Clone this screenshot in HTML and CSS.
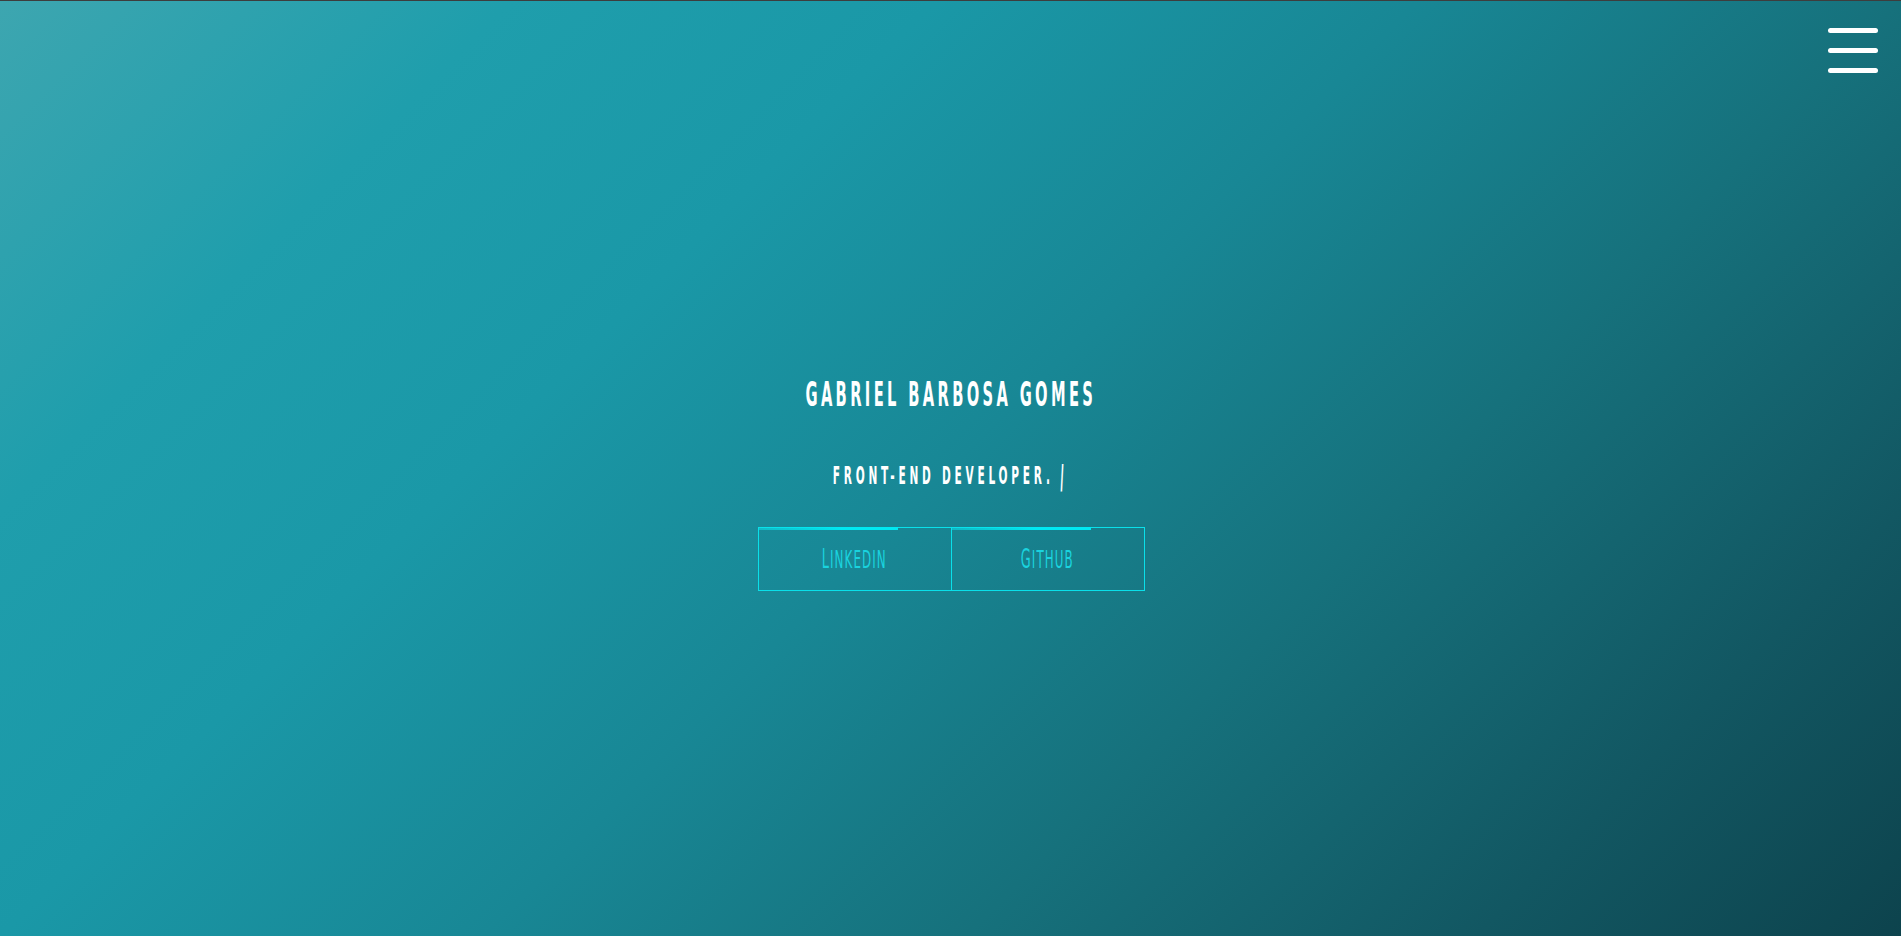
FILE: index.html
```html
<!DOCTYPE html>
<html lang="pt">
<head>
<meta charset="utf-8">
<title>Gabriel Barbosa Gomes</title>
<link rel="stylesheet" href="styles.css">
</head>
<body>
<div class="page">
  <nav class="menu-toggle" aria-label="menu">
    <span class="bar"></span>
    <span class="bar"></span>
    <span class="bar"></span>
  </nav>
  <main class="hero">
    <h1 class="title">Gabriel Barbosa Gomes</h1>
    <p class="subtitle">front-end developer. <span class="cursor">|</span></p>
    <div class="links">
      <a class="link link-first" href="#"><span class="progress"></span><span class="label">Linkedin</span></a>
      <a class="link" href="#"><span class="progress"></span><span class="label">Github</span></a>
    </div>
  </main>
</div>
</body>
</html>
```

FILE: styles.css
```css
html, body {
  margin: 0;
  padding: 0;
}
body {
  font-family: "DejaVu Sans", "Liberation Sans", sans-serif;
  background: #0d434d;
}
.page {
  position: relative;
  height: 935px;
  border-top: 1px solid #3d3d3d;
  background: linear-gradient(135deg,
    #3da6b0 0%,
    #1f9eac 18%,
    #1a98a7 33%,
    #188795 50%,
    #16717c 67%,
    #125762 85%,
    #0d434d 100%);
  overflow: hidden;
}
.menu-toggle {
  position: absolute;
  top: 27px;
  right: 23px;
  display: flex;
  flex-direction: column;
  gap: 15px;
}
.bar {
  display: block;
  width: 50px;
  height: 5px;
  border-radius: 3px;
  background: #ffffff;
}
.hero {
  display: flex;
  flex-direction: column;
  align-items: center;
  padding-top: 373px;
}
.title {
  margin: 0;
  font-size: 34px;
  line-height: 40px;
  font-weight: bold;
  font-stretch: condensed;
  text-transform: uppercase;
  letter-spacing: 7px;
  color: #ffffff;
  transform: scaleX(0.48);
  white-space: nowrap;
}
.subtitle {
  margin: 47px 0 0;
  height: 30px;
  font-size: 25px;
  line-height: 30px;
  font-weight: bold;
  font-stretch: condensed;
  text-transform: uppercase;
  letter-spacing: 8px;
  color: #ffffff;
  transform: scaleX(0.47);
  white-space: nowrap;
}
.cursor {
  font-weight: normal;
  display: inline-block;
  line-height: 20px;
  transform: skewX(-6deg) scaleX(1.6) scaleY(1.1);
}
.links {
  margin: 36px 0 0 1px;
  display: flex;
  border: 1px solid #0ae0ea;
}
.link {
  position: relative;
  width: 192px;
  height: 62px;
  display: flex;
  align-items: center;
  justify-content: center;
  text-decoration: none;
  color: #1ad3df;
}
.link-first {
  box-sizing: border-box;
  width: 193px;
  border-right: 1px solid #0ae0ea;
}
.progress {
  position: absolute;
  top: -1px;
  left: -1px;
  width: 140px;
  height: 3px;
  background: linear-gradient(to right, rgba(10, 224, 234, 0.55), #00e8f2 60%);
}
.label {
  display: inline-block;
  font-size: 24px;
  line-height: 30px;
  font-stretch: condensed;
  text-transform: uppercase;
  letter-spacing: 2px;
  transform: scaleX(0.55);
}
.label::first-letter {
  font-size: 26px;
}
```
